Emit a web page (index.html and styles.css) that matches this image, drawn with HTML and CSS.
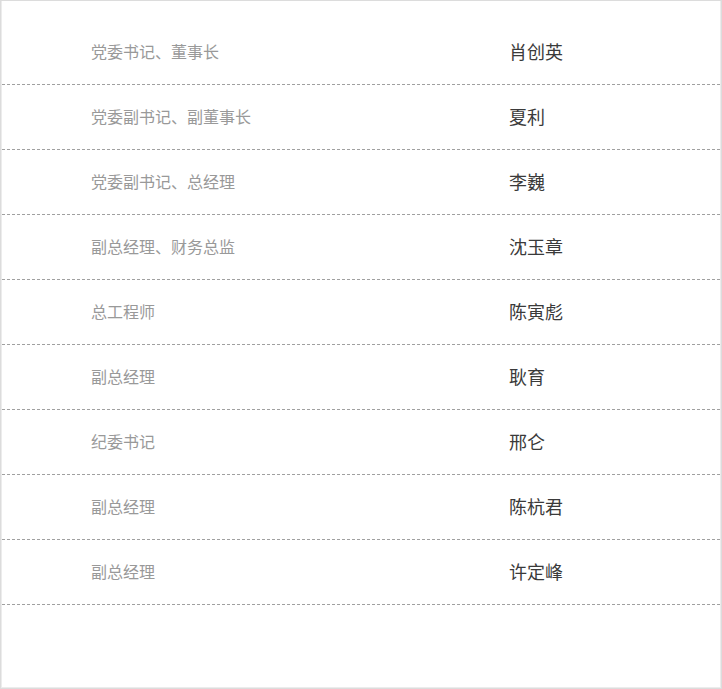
FILE: index.html
```html
<!DOCTYPE html>
<html lang="zh-CN">
<head>
<meta charset="utf-8">
<title>领导班子</title>
<link rel="stylesheet" href="styles.css">
</head>
<body>
<div class="panel">
  <ul class="list">
    <li class="row"><span class="title">党委书记、董事长</span><span class="name">肖创英</span></li>
    <li class="row"><span class="title">党委副书记、副董事长</span><span class="name">夏利</span></li>
    <li class="row"><span class="title">党委副书记、总经理</span><span class="name">李巍</span></li>
    <li class="row"><span class="title">副总经理、财务总监</span><span class="name">沈玉章</span></li>
    <li class="row"><span class="title">总工程师</span><span class="name">陈寅彪</span></li>
    <li class="row"><span class="title">副总经理</span><span class="name">耿育</span></li>
    <li class="row"><span class="title">纪委书记</span><span class="name">邢仑</span></li>
    <li class="row"><span class="title">副总经理</span><span class="name">陈杭君</span></li>
    <li class="row"><span class="title">副总经理</span><span class="name">许定峰</span></li>
  </ul>
</div>
</body>
</html>
```

FILE: styles.css
```css
html, body {
  margin: 0;
  padding: 0;
  background: #fff;
}
body {
  font-family: "Noto Sans CJK SC", "Noto Sans", sans-serif;
}
.panel {
  box-sizing: border-box;
  width: 722px;
  height: 689px;
  border: 1px solid #dcdcdc;
  box-shadow: inset 1px 0 0 #ececec, inset -1px -1px 0 #ececec;
  padding-top: 19px;
}
.list {
  list-style: none;
  margin: 0;
  padding: 0 1px 0 1px;
}
.row {
  box-sizing: border-box;
  display: grid;
  grid-template-columns: 418px 1fr;
  align-items: center;
  height: 65px;
  padding: 0 0 2px 89px;
  border-bottom: 1px dashed #a0a0a0;
}
.title {
  font-size: 16px;
  color: #999;
  line-height: 20px;
}
.name {
  font-size: 18px;
  color: #3a3a3a;
  line-height: 22px;
}
```
